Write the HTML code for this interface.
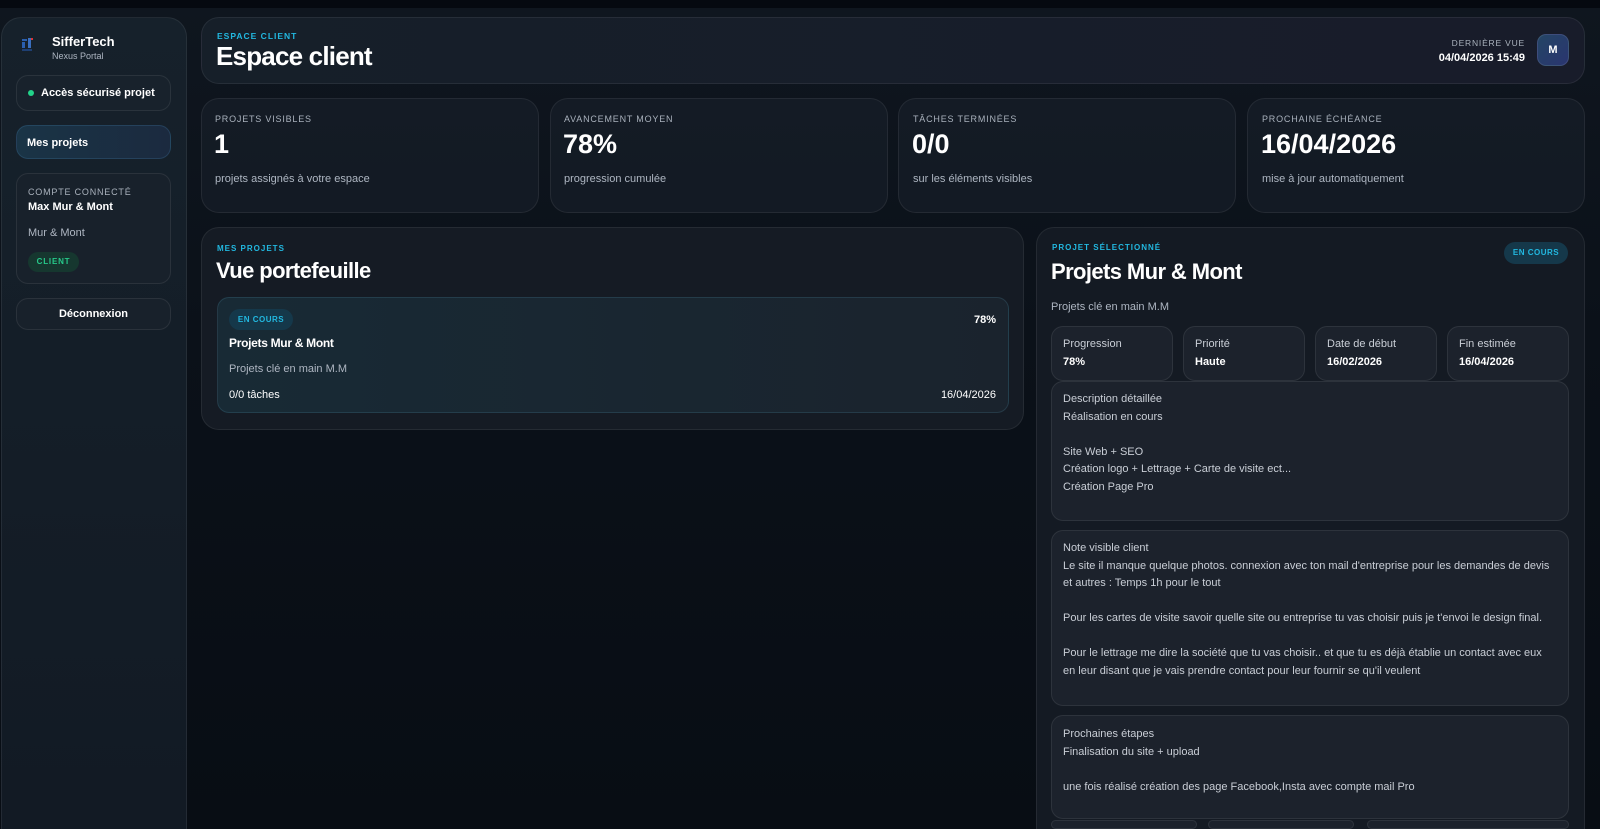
<!DOCTYPE html>
<html style="width:1600px;height:829px;overflow:hidden;background:#080d14"><head><meta charset="utf-8"><style>
*{box-sizing:border-box;margin:0;padding:0}
body{width:1600px;height:829px;overflow:hidden;background:linear-gradient(180deg,#0f161f 0%,#0b1119 40%,#080d14 100%);font-family:"Liberation Sans",sans-serif;color:#fff;position:relative}
.top{position:absolute;left:0;top:0;width:1600px;height:8px;background:#050910}
.a{position:absolute}
.card{position:absolute;border:1px solid rgba(255,255,255,.07);border-radius:18px;background:rgba(25,33,44,.55)}
.open{border-bottom:none;border-bottom-left-radius:0;border-bottom-right-radius:0}
.lbl{font-size:9px;font-weight:bold;letter-spacing:1px;color:#22b8e0}
.muted{color:#aeb6c2}
.sl{font-size:9px;letter-spacing:.8px;color:#aab2bd}
.box{position:absolute;border:1px solid rgba(255,255,255,.08);border-radius:12px;background:#1c222c}
.t{font-size:11px;color:#c9ced6;line-height:17.5px}
</style></head><body>
<div class="top"></div>
<div class="card open" style="left:1px;top:17px;width:186px;height:812px;background:linear-gradient(180deg,#16212b,#121a24);border-radius:20px 20px 0 0"></div>
<div class="a" style="left:20px;top:36px;width:16px;height:18px">
<svg width="16" height="18"><rect x="2" y="3" width="5" height="2" fill="#2a5fae"/><rect x="2" y="6" width="3" height="6" fill="#2a5fae"/><rect x="8" y="2" width="3" height="10" fill="#3a6fbf"/><rect x="11" y="2" width="2" height="2" fill="#d33"/><rect x="2" y="13" width="10" height="2" fill="#1e3f73"/></svg></div>
<div class="a" style="left:52px;top:34px;font-size:13px;font-weight:bold">SifferTech</div>
<div class="a" style="left:52px;top:51px;font-size:9px;color:#aeb6c2">Nexus Portal</div>
<div class="box" style="left:16px;top:75px;width:155px;height:36px;background:#18222c;border-radius:12px"></div>
<div class="a" style="left:28px;top:90px;width:6px;height:6px;border-radius:50%;background:#22d38a"></div>
<div class="a" style="left:41px;top:87px;font-size:11px;font-weight:bold">Accès sécurisé projet</div>
<div class="box" style="left:16px;top:125px;width:155px;height:34px;background:linear-gradient(90deg,#1a3446,#1b2a3f);border-color:rgba(80,150,200,.2)"></div>
<div class="a" style="left:27px;top:137px;font-size:11px;font-weight:bold">Mes projets</div>
<div class="box" style="left:16px;top:173px;width:155px;height:111px;background:#18212b"></div>
<div class="a sl" style="left:28px;top:187px">COMPTE CONNECTÉ</div>
<div class="a" style="left:28px;top:201px;font-size:11px;font-weight:bold">Max Mur &amp; Mont</div>
<div class="a muted" style="left:28px;top:227px;font-size:11px">Mur &amp; Mont</div>
<div class="a" style="left:28px;top:252px;width:51px;height:20px;border-radius:10px;background:#16372f;color:#27c98a;font-size:8px;font-weight:bold;letter-spacing:.8px;text-align:center;line-height:20px">CLIENT</div>
<div class="box" style="left:16px;top:298px;width:155px;height:32px;background:#18212b"></div>
<div class="a" style="left:16px;top:308px;width:155px;text-align:center;font-size:11px;font-weight:bold">Déconnexion</div>
<div class="card" style="left:201px;top:17px;width:1384px;height:67px;background:linear-gradient(90deg,#161f29,#181c2a)"></div>
<div class="a lbl" style="left:217px;top:31px;font-size:8.5px">ESPACE CLIENT</div>
<div class="a" style="left:216px;top:41px;font-size:26px;font-weight:bold;letter-spacing:-.8px">Espace client</div>
<div class="a sl" style="left:1380px;top:38px;width:145px;text-align:right;font-size:8.5px">DERNIÈRE VUE</div>
<div class="a" style="left:1380px;top:52px;width:145px;text-align:right;font-size:11px;font-weight:bold">04/04/2026 15:49</div>
<div class="a" style="left:1537px;top:34px;width:32px;height:32px;border-radius:9px;background:linear-gradient(135deg,#244565,#2a3570);border:1px solid rgba(255,255,255,.1);text-align:center;line-height:30px;font-size:11px;font-weight:bold">M</div>
<div class="card" style="left:201px;top:98px;width:338px;height:115px"></div>
<div class="card" style="left:550px;top:98px;width:338px;height:115px"></div>
<div class="card" style="left:898px;top:98px;width:338px;height:115px"></div>
<div class="card" style="left:1247px;top:98px;width:338px;height:115px"></div>
<div class="a sl" style="left:215px;top:114px">PROJETS VISIBLES</div>
<div class="a" style="left:214px;top:129px;font-size:27px;font-weight:bold">1</div>
<div class="a muted" style="left:215px;top:173px;font-size:11px">projets assignés à votre espace</div>
<div class="a sl" style="left:564px;top:114px">AVANCEMENT MOYEN</div>
<div class="a" style="left:563px;top:129px;font-size:27px;font-weight:bold">78%</div>
<div class="a muted" style="left:564px;top:173px;font-size:11px">progression cumulée</div>
<div class="a sl" style="left:913px;top:114px">TÂCHES TERMINÉES</div>
<div class="a" style="left:912px;top:129px;font-size:27px;font-weight:bold">0/0</div>
<div class="a muted" style="left:913px;top:173px;font-size:11px">sur les éléments visibles</div>
<div class="a sl" style="left:1262px;top:114px">PROCHAINE ÉCHÉANCE</div>
<div class="a" style="left:1261px;top:129px;font-size:27px;font-weight:bold">16/04/2026</div>
<div class="a muted" style="left:1262px;top:173px;font-size:11px">mise à jour automatiquement</div>
<div class="card" style="left:201px;top:227px;width:823px;height:203px;background:#151b24"></div>
<div class="a lbl" style="left:217px;top:244px;font-size:8px">MES PROJETS</div>
<div class="a" style="left:216px;top:258px;font-size:22px;font-weight:bold;letter-spacing:-.6px">Vue portefeuille</div>
<div class="a" style="left:217px;top:297px;width:792px;height:116px;border-radius:12px;border:1px solid rgba(90,160,190,.18);background:linear-gradient(90deg,#182a35,#1a232d)"></div>
<div class="a" style="left:229px;top:309px;width:64px;height:21px;border-radius:11px;background:#15384a;color:#22b8e0;font-size:8px;font-weight:bold;text-align:center;line-height:21px;letter-spacing:.5px">EN COURS</div>
<div class="a" style="left:950px;top:314px;width:46px;text-align:right;font-size:11px;font-weight:bold">78%</div>
<div class="a" style="left:229px;top:336px;font-size:12px;font-weight:bold;letter-spacing:-.3px">Projets Mur &amp; Mont</div>
<div class="a muted" style="left:229px;top:363px;font-size:11px">Projets clé en main M.M</div>
<div class="a" style="left:229px;top:389px;font-size:11px">0/0 tâches</div>
<div class="a" style="left:900px;top:389px;width:96px;text-align:right;font-size:11px">16/04/2026</div>
<div class="card open" style="left:1036px;top:227px;width:549px;height:602px;background:#141a23"></div>
<div class="a lbl" style="left:1052px;top:243px;font-size:8px">PROJET SÉLECTIONNÉ</div>
<div class="a" style="left:1051px;top:259px;font-size:22px;font-weight:bold;letter-spacing:-.6px">Projets Mur &amp; Mont</div>
<div class="a" style="left:1504px;top:242px;width:64px;height:22px;border-radius:11px;background:#15384a;color:#22b8e0;font-size:8px;font-weight:bold;text-align:center;line-height:22px;letter-spacing:.5px">EN COURS</div>
<div class="a muted" style="left:1051px;top:301px;font-size:11px">Projets clé en main M.M</div>
<div class="box" style="left:1051px;top:326px;width:122px;height:55px"></div>
<div class="box" style="left:1183px;top:326px;width:122px;height:55px"></div>
<div class="box" style="left:1315px;top:326px;width:122px;height:55px"></div>
<div class="box" style="left:1447px;top:326px;width:122px;height:55px"></div>
<div class="a t" style="left:1063px;top:336px">Progression<br><b style="color:#fff">78%</b></div>
<div class="a t" style="left:1195px;top:336px">Priorité<br><b style="color:#fff">Haute</b></div>
<div class="a t" style="left:1327px;top:336px">Date de début<br><b style="color:#fff">16/02/2026</b></div>
<div class="a t" style="left:1459px;top:336px">Fin estimée<br><b style="color:#fff">16/04/2026</b></div>
<div class="box" style="left:1051px;top:381px;width:518px;height:140px"></div>
<div class="a t" style="left:1063px;top:391px">Description détaillée<br>Réalisation en cours<br><br>Site Web + SEO<br>Création logo + Lettrage + Carte de visite ect...<br>Création Page Pro</div>
<div class="box" style="left:1051px;top:530px;width:518px;height:176px"></div>
<div class="a t" style="left:1063px;top:540px;width:494px">Note visible client<br>Le site il manque quelque photos. connexion avec ton mail d'entreprise pour les demandes de devis et autres : Temps 1h pour le tout<br><br>Pour les cartes de visite savoir quelle site ou entreprise tu vas choisir puis je t'envoi le design final.<br><br>Pour le lettrage me dire la société que tu vas choisir.. et que tu es déjà établie un contact avec eux en leur disant que je vais prendre contact pour leur fournir se qu'il veulent</div>
<div class="box" style="left:1051px;top:715px;width:518px;height:104px"></div>
<div class="a t" style="left:1063px;top:726px">Prochaines étapes<br>Finalisation du site + upload<br><br>une fois réalisé création des page Facebook,Insta avec compte mail Pro</div>
<div class="box open" style="left:1051px;top:820px;width:146px;height:9px"></div>
<div class="box open" style="left:1208px;top:820px;width:146px;height:9px"></div>
<div class="box open" style="left:1367px;top:820px;width:202px;height:9px"></div>
</body></html>
